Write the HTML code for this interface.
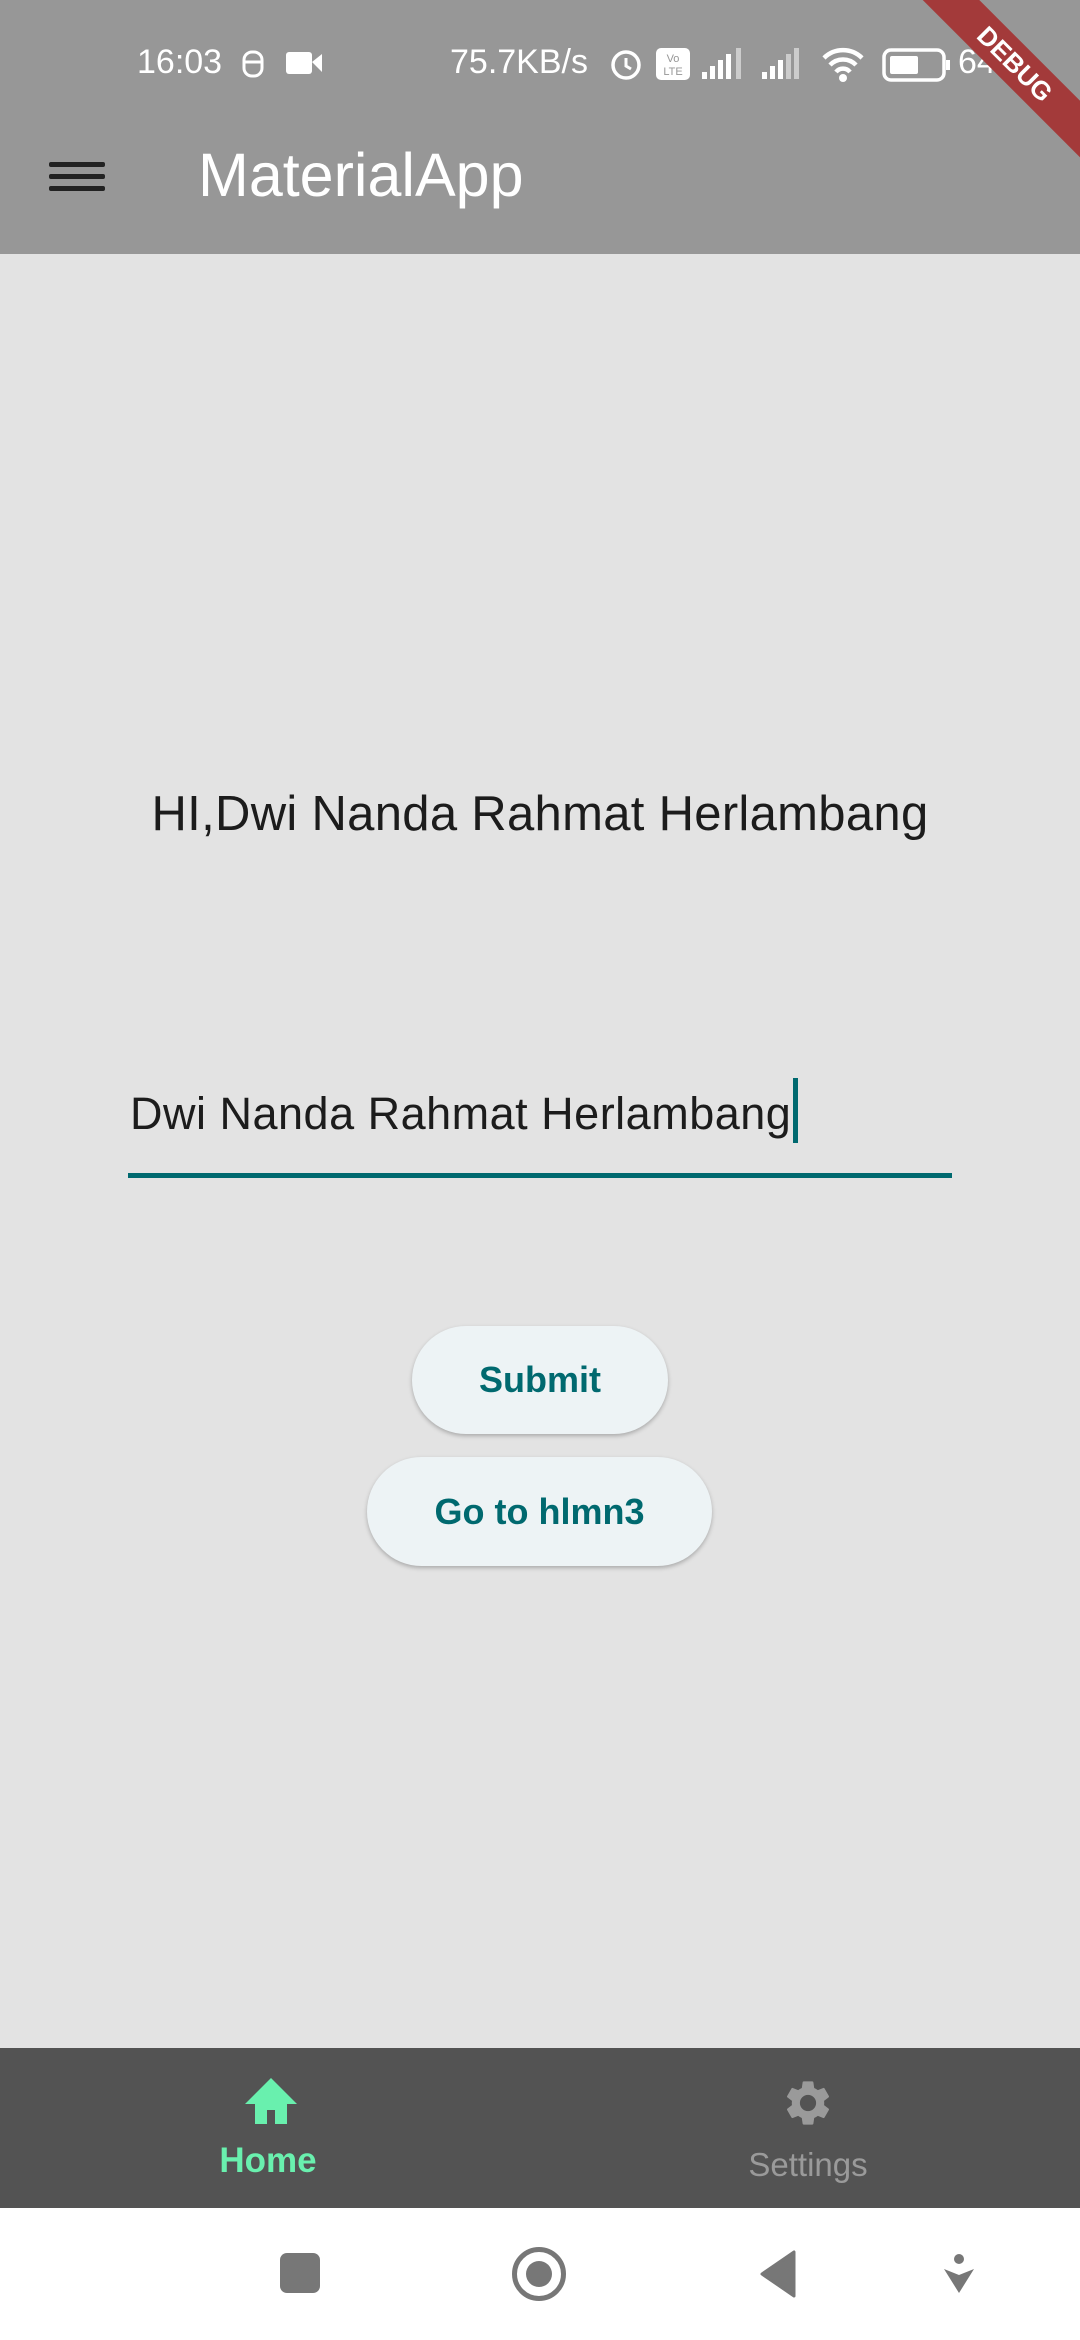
<!DOCTYPE html>
<html><head><meta charset="utf-8"><style>
*{margin:0;padding:0;box-sizing:border-box}
body{width:1080px;height:2340px;position:relative;overflow:hidden;background:#e3e3e3;font-family:"Liberation Sans",sans-serif}
.abs{position:absolute}
#top{left:0;top:0;width:1080px;height:254px;background:#979797}
.st{color:#fff;font-size:34px;top:43px}
#nav{left:0;top:2048px;width:1080px;height:160px;background:#535353}
#sys{left:0;top:2208px;width:1080px;height:132px;background:#fff}
.btn{background:#edf3f5;border-radius:60px;color:#00696f;font-weight:bold;font-size:36px;display:flex;align-items:center;justify-content:center;box-shadow:0 2px 4px rgba(0,0,0,.25)}
</style></head><body>
<div id="top" class="abs"></div>
<div class="abs st" style="left:137px;">16:03</div>
<svg class="abs" style="left:240px;top:46px" width="26" height="34" viewBox="0 0 26 34"><rect x="4" y="6" width="18" height="24" rx="8" fill="none" stroke="#fff" stroke-width="3"/><line x1="4" y1="16" x2="22" y2="16" stroke="#fff" stroke-width="3"/></svg>
<svg class="abs" style="left:286px;top:50px" width="38" height="26"><rect x="0" y="2" width="26" height="22" rx="3" fill="#fff"/><polygon points="26,12 36,4 36,22" fill="#fff"/></svg>
<div class="abs st" style="left:450px;">75.7KB/s</div>
<svg class="abs" style="left:607px;top:44px" width="38" height="38"><circle cx="19" cy="21" r="13" fill="none" stroke="#fff" stroke-width="3.5"/><path d="M19 14v8l5 3" stroke="#fff" stroke-width="3" fill="none"/></svg>
<svg class="abs" style="left:656px;top:48px" width="34" height="32"><rect width="34" height="32" rx="5" fill="#fff"/><text x="17" y="14" font-size="11" text-anchor="middle" fill="#979797" font-family="Liberation Sans">Vo</text><text x="17" y="27" font-size="11" text-anchor="middle" fill="#979797" font-family="Liberation Sans">LTE</text></svg>
<svg class="abs" style="left:700px;top:48px" width="48" height="32"><rect x="2" y="24" width="5" height="7" fill="#fff"/><rect x="10" y="18" width="5" height="13" fill="#fff"/><rect x="18" y="12" width="5" height="19" fill="#fff"/><rect x="26" y="6" width="5" height="25" fill="#fff"/><rect x="36" y="0" width="5" height="31" fill="#ccc"/></svg>
<svg class="abs" style="left:760px;top:48px" width="48" height="32"><rect x="2" y="24" width="5" height="7" fill="#fff"/><rect x="10" y="18" width="5" height="13" fill="#fff"/><rect x="18" y="12" width="5" height="19" fill="#fff"/><rect x="26" y="6" width="5" height="25" fill="#ccc"/><rect x="34" y="0" width="5" height="31" fill="#ccc"/></svg>
<svg class="abs" style="left:820px;top:44px" width="46" height="40" viewBox="0 0 46 40"><path d="M4 14a27 27 0 0 1 38 0M10 21a18 18 0 0 1 26 0M16 28a9 9 0 0 1 14 0" stroke="#fff" stroke-width="4.5" fill="none"/><circle cx="23" cy="34" r="4" fill="#fff"/></svg>
<svg class="abs" style="left:882px;top:48px" width="70" height="34"><rect x="2" y="2" width="60" height="30" rx="7" fill="none" stroke="#fff" stroke-width="3.5"/><rect x="8" y="8" width="28" height="18" rx="2" fill="#fff"/><rect x="64" y="12" width="4" height="10" fill="#fff"/></svg>
<div class="abs st" style="left:958px;">64</div>
<div class="abs" style="left:815px;top:44px;width:400px;height:40px;line-height:40px;background:#a33a3a;transform:rotate(45deg);text-align:center;color:#fff;font-weight:bold;font-size:26px">DEBUG</div>
<div class="abs" style="left:49px;top:162px;width:56px;height:5px;background:#222;border-radius:2px"></div>
<div class="abs" style="left:49px;top:174px;width:56px;height:5px;background:#222;border-radius:2px"></div>
<div class="abs" style="left:49px;top:186px;width:56px;height:5px;background:#222;border-radius:2px"></div>
<div class="abs" style="left:198px;top:140px;color:#fff;font-size:61px">MaterialApp</div>
<div class="abs" style="left:0;width:1080px;text-align:center;top:786px;font-size:49px;color:#1c1c1c;letter-spacing:0.3px">HI,Dwi Nanda Rahmat Herlambang</div>
<div class="abs" style="left:130px;top:1088px;font-size:45px;color:#1c1c1c;letter-spacing:0.5px">Dwi Nanda Rahmat Herlambang</div>
<div class="abs" style="left:793px;top:1078px;width:5px;height:65px;background:#00696f"></div>
<div class="abs" style="left:128px;top:1173px;width:824px;height:5px;background:#00696f"></div>
<div class="abs btn" style="left:412px;top:1326px;width:256px;height:108px">Submit</div>
<div class="abs btn" style="left:367px;top:1457px;width:345px;height:109px">Go to hlmn3</div>
<div id="nav" class="abs"></div>
<svg class="abs" style="left:243px;top:2076px" width="56" height="50" viewBox="0 0 56 50"><polygon points="28,2 54,28 44,28 44,48 32,48 32,34 24,34 24,48 12,48 12,28 2,28" fill="#69f0ae"/></svg>
<div class="abs" style="left:168px;width:200px;text-align:center;top:2141px;font-size:35px;font-weight:bold;color:#69f0ae">Home</div>
<svg class="abs" style="left:781px;top:2075px" width="54" height="56" viewBox="0 0 24 24"><path fill="#9a9a9a" d="M19.14 12.94c.04-.3.06-.61.06-.94s-.02-.64-.07-.94l2.030-1.58a.49.49 0 0 0 .12-.61l-1.92-3.32a.49.49 0 0 0-.59-.22l-2.39.96c-.5-.38-1.030-.7-1.62-.94L14.4 2.81a.48.48 0 0 0-.48-.41h-3.84c-.24 0-.43.17-.47.41l-.36 2.54c-.59.24-1.13.57-1.62.94l-2.39-.96a.48.48 0 0 0-.59.22L2.74 8.87c-.12.21-.08.47.12.61l2.030 1.58c-.05.3-.09.63-.09.94s.02.64.07.94l-2.030 1.58a.49.49 0 0 0-.12.61l1.92 3.32c.12.22.37.29.59.22l2.39-.96c.5.38 1.030.7 1.62.94l.36 2.54c.05.24.24.41.48.41h3.84c.24 0 .44-.17.47-.41l.36-2.54c.59-.24 1.13-.56 1.62-.94l2.39.96c.22.08.47 0 .59-.22l1.92-3.32c.12-.22.07-.47-.12-.61l-2.010-1.58zM12 15.6A3.6 3.6 0 1 1 12 8.4a3.6 3.6 0 0 1 0 7.2z"/></svg>
<div class="abs" style="left:708px;width:200px;text-align:center;top:2146px;font-size:33px;color:#9a9a9a">Settings</div>
<div id="sys" class="abs"></div>
<div class="abs" style="left:280px;top:2253px;width:40px;height:40px;background:#777;border-radius:7px"></div>
<div class="abs" style="left:512px;top:2247px;width:54px;height:54px;border:5px solid #777;border-radius:50%"></div>
<div class="abs" style="left:526px;top:2261px;width:26px;height:26px;background:#777;border-radius:50%"></div>
<svg class="abs" style="left:758px;top:2250px" width="40" height="48"><path d="M36 2 L36 46 L4 24 Z" fill="#777" stroke="#777" stroke-width="3" stroke-linejoin="round"/></svg>
<svg class="abs" style="left:942px;top:2253px" width="34" height="42"><circle cx="17" cy="6" r="5" fill="#777"/><path d="M2 16 L17 22 L32 16 L17 40 Z" fill="#777"/></svg>
</body></html>
